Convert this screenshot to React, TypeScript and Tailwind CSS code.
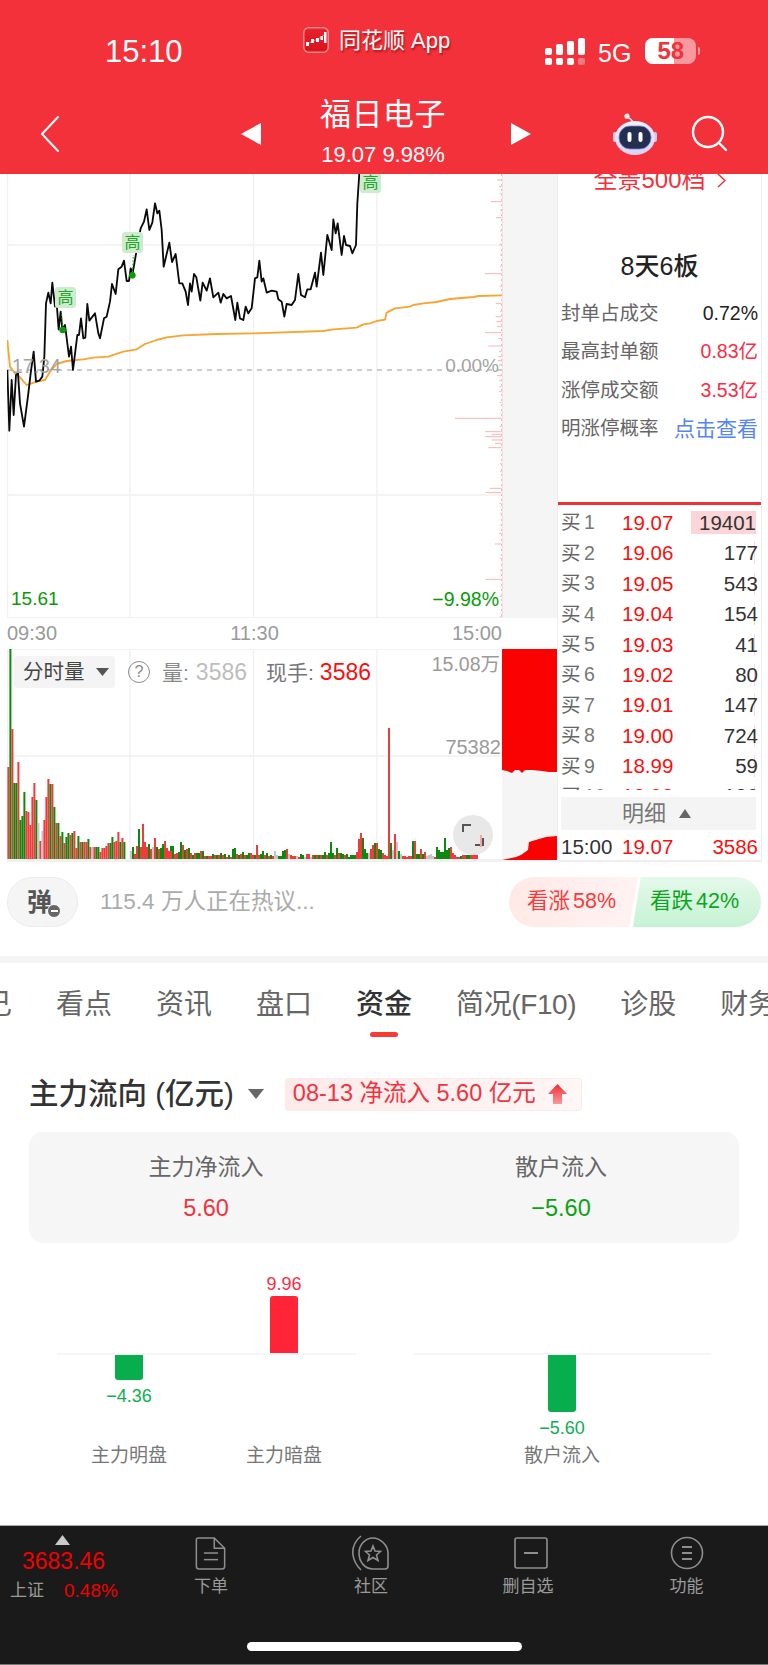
import React from "react";

const PRICE = "22,600 28,782 35,630 41,735 48,615 54,610 60,700 72,770 85,670 92,610 101,545 108,635 118,632 127,620 133,560 138,400 145,368 152,400 157,338 165,410 170,400 176,478 182,425 187,478 195,465 207,560 213,530 219,600 232,495 237,495 243,445 250,505 256,503 262,402 268,452 285,430 295,490 300,505 312,445 320,440 330,395 336,342 347,372 355,298 365,290 372,272 380,333 387,333 392,295 398,310 410,240 422,175 432,155 440,118 448,180 457,158 465,100 472,130 478,122 485,180 491,290 508,218 516,276 527,252 538,340 547,340 557,365 564,405 570,340 575,365 582,312 589,322 601,392 608,338 620,362 630,325 640,382 655,368 662,398 670,372 680,385 693,378 706,450 712,398 720,445 730,450 737,410 745,430 755,415 765,325 772,322 778,272 785,335 790,325 800,368 815,362 830,365 835,388 845,395 853,440 860,402 875,405 885,390 895,312 903,375 915,382 922,358 932,358 945,308 950,350 963,248 970,315 982,195 995,240 1000,148 1007,190 1013,160 1025,255 1032,198 1038,225 1050,228 1057,250 1068,225 1072,100 1078,10";
const AVG = "22,510 30,590 45,610 60,622 80,645 95,640 110,635 135,630 150,605 170,582 200,573 250,568 280,563 325,560 370,545 410,538 435,522 470,510 500,502 550,496 650,492 760,490 970,483 1000,478 1070,473 1090,463 1110,460 1130,453 1155,449 1160,428 1185,415 1230,410 1240,405 1270,400 1310,396 1350,387 1420,381 1435,378 1505,376";

const TICKS: [number, number][] = [[30,14],[50,8],[70,6],[95,33],[120,5],[143,17],[183,5],[223,6],[255,5],[290,5],[311,50],[350,6],[400,18],[425,5],[440,18],[455,16],[470,14],[488,50],[505,10],[528,40],[545,8],[560,10],[572,12],[585,8],[617,14],[632,7],[650,6],[665,8],[697,6],[745,140],[770,6],[785,50],[793,30],[800,50],[810,30],[820,20],[833,40],[880,5],[905,5],[955,35],[968,48],[1000,6],[1030,5],[1065,5],[1090,8],[1122,20],[1165,5],[1200,5],[1228,48],[1280,5],[1340,5],[1388,42]];

const V1 = "92r 210g 130r 76g 76g 97r 39g 43g 67g 48r 47r 34r 62r 76r 59g 36a 18r 28a 39r 62r 80r 75g 75r 52g 36r 36g 23r 27g 16r 22g 26g 24r 26g 28r 11r 23g 17r 17g 17r 17r 20g 12r 12a 12r 12g 12g 7r 11r 11r 13r 16r 16g 22g 17r 18r 27r 17g 21r 17g";
const V2 = "8a 12g 5r 13r 30g 12r 35r 17r 12r 15g 10r 12a 21r 12g 10r 11g 15g 18r 11r 8r 13g";
const V3 = "8r 13g 5r 6r 7g 17g 14r 9g 10r 11g 6r 4g 6r 6g 6g 8r 8g 3r 3g 3r 3r 5g 4r 4g 4r 6g 4r 5g 2r 4g 2r 10g 11g 5r 4g 5r 7g 4r 4g 6g 6r 4r 4g 14r 4r 5g 8g 4r 6g 3r 4g 3r 8a 4a 3g 3g 8g 9g 10r 5a 4r 3r 3r 3a 2r 5g 4g 2a 5r 5r 2a 4r 4g 4r 4g 4r 4g 7g 4r 6g 17g 6g 4r 11g 6r 6g 5g 4r 5g 2g 4g 4g 4g 7r 20r 26r 21g 10g 6g 6a 10r 14r 16g 16r 10g 9g 6r 4r 3r 131r 16g 9a 25r 17a 8g 5a 3r 3r 2r 3r 3r 18g 18r 5g 5g 10r 5g 7r 3a 4a 5a 3a 2r 12g 9g 7g 7g 21g 9g 11g 12r 6r 4r 2r 2r 3g 4r 4r 4g 4g 4r 4r 4r 4r";

const parseBars = (s: string, x0: number) =>
  s.split(" ").map((t, i) => ({ x: x0 + i * 2, h: parseInt(t), c: t.slice(-1) }));
const BARS = [...parseBars(V1, 7.4), ...parseBars(V2, 130), ...parseBars(V3, 170)];
const barFill: Record<string, string> = { r: "#ee3b3b", g: "#0b8a0d", a: "#c6c6c6" };

const BOOK = [
  ["1", "19.07", "19401"],
  ["2", "19.06", "177"],
  ["3", "19.05", "543"],
  ["4", "19.04", "154"],
  ["5", "19.03", "41"],
  ["6", "19.02", "80"],
  ["7", "19.01", "147"],
  ["8", "19.00", "724"],
  ["9", "18.99", "59"],
  ["10", "18.98", "186"],
];

function Signal() {
  return (
    <svg width="40" height="28" viewBox="0 0 40 28">
      <g fill="#fff">
        <rect x="0" y="10" width="7" height="7" rx="2" />
        <rect x="11" y="6" width="7" height="11" rx="2" />
        <rect x="22" y="3" width="7" height="14" rx="2" />
        <rect x="33" y="0" width="7" height="17" rx="2" />
        <rect x="0" y="20" width="7" height="7" rx="2" />
        <rect x="11" y="20" width="7" height="7" rx="2" />
        <rect x="22" y="20" width="7" height="7" rx="2" />
        <rect x="33" y="20" width="7" height="7" rx="2" opacity="0.35" />
      </g>
    </svg>
  );
}

function AppLogo() {
  return (
    <svg width="26" height="26" viewBox="0 0 26 26">
      <defs>
        <linearGradient id="lg" x1="0" y1="0" x2="0" y2="1">
          <stop offset="0" stopColor="#e8222c" />
          <stop offset="1" stopColor="#d9121c" />
        </linearGradient>
      </defs>
      <rect x="0.75" y="0.75" width="24.5" height="24.5" rx="5" fill="url(#lg)" stroke="#f98a90" strokeWidth="1.5" />
      <polyline points="4,17 10,14 15,12 21,8" fill="none" stroke="#fff" strokeWidth="0.6" opacity="0.7" />
      <g fill="#fff">
        <rect x="3" y="15" width="3" height="4" />
        <rect x="8" y="12" width="3" height="4" />
        <rect x="13" y="11" width="3" height="4" />
        <rect x="17.5" y="9" width="2.5" height="4" />
        <rect x="21" y="5" width="2.5" height="11" />
      </g>
    </svg>
  );
}

function Robot() {
  return (
    <svg width="46" height="42" viewBox="0 0 46 42">
      <defs>
        <linearGradient id="rb" x1="0" y1="0" x2="0" y2="1">
          <stop offset="0" stopColor="#f2f2fb" />
          <stop offset="1" stopColor="#d9d3f3" />
        </linearGradient>
      </defs>
      <path d="M21 9 C19 6 17 5 15.5 4" stroke="#e9e6f7" strokeWidth="1.6" fill="none" />
      <circle cx="15" cy="3.2" r="2.6" fill="#f5e9ea" />
      <rect x="1" y="19" width="4" height="10" rx="2" fill="#cfc9ee" />
      <rect x="41" y="19" width="4" height="10" rx="2" fill="#cfc9ee" />
      <ellipse cx="23" cy="25" rx="20" ry="17" fill="url(#rb)" />
      <rect x="7" y="13" width="32" height="23" rx="11" fill="#232f4e" stroke="#8d7fe0" strokeWidth="0.8" />
      <rect x="15.5" y="19" width="4" height="10" rx="2" fill="#fff" />
      <rect x="26.5" y="19" width="4" height="10" rx="2" fill="#fff" />
    </svg>
  );
}

function Header() {
  return (
    <header className="h-[174px] shrink-0 bg-[#f3313a] text-white relative">
      <div className="h-[96px] flex items-start">
        <div className="w-[287px] pl-[105px] pt-[35px] text-[31px] leading-[34px] font-medium">15:10</div>
        <div className="pt-[27px] pl-[16px] w-[258px] flex items-start gap-[10px]">
          <AppLogo />
          <span className="text-[22px] leading-[28px] [text-shadow:1px_2px_2px_rgba(120,0,0,0.6)]">同花顺 App</span>
        </div>
        <div className="pt-[38px] flex items-start">
          <Signal />
          <span className="ml-[13px] text-[25px] leading-[30px]">5G</span>
          <div className="ml-[14px] relative w-[51px] h-[26px] rounded-[8px] bg-white/50 overflow-hidden">
            <div className="w-[29px] h-full bg-white" />
            <span className="absolute inset-0 flex items-center justify-center text-[24px] font-bold text-[#f3313a]">58</span>
          </div>
          <div className="ml-[2px] mt-[9px] w-[2px] h-[8px] rounded-r bg-white/50" />
        </div>
      </div>
      <div className="h-[78px] flex items-start">
        <div className="w-[241px] pl-[38px] pt-[19px]">
          <svg width="24" height="38" viewBox="0 0 24 38">
            <polyline points="20,2 4,19 20,36" fill="none" stroke="#fff" strokeWidth="2" strokeLinecap="round" strokeLinejoin="round" />
          </svg>
        </div>
        <div className="pt-[27px]">
          <svg width="20" height="22" viewBox="0 0 20 22"><polygon points="20,0 20,22 0,11" fill="#fff" /></svg>
        </div>
        <div className="w-[250px] pr-[6px] flex flex-col items-center -mt-[1px]">
          <div className="text-[31px] leading-[40px] tracking-[0.5px]">福日电子</div>
          <div className="text-[22px] leading-[26px] mt-[7px]">19.07 9.98%</div>
        </div>
        <div className="pt-[27px]">
          <svg width="20" height="22" viewBox="0 0 20 22"><polygon points="0,0 0,22 20,11" fill="#fff" /></svg>
        </div>
        <div className="ml-[81px] pt-[17px]"><Robot /></div>
        <div className="ml-[33px] pt-[17px]">
          <svg width="40" height="40" viewBox="0 0 40 40">
            <circle cx="17" cy="19" r="15" fill="none" stroke="#fff" strokeWidth="2.4" />
            <line x1="28" y1="30" x2="35" y2="37" stroke="#fff" strokeWidth="2.4" strokeLinecap="round" />
          </svg>
        </div>
      </div>
    </header>
  );
}

function GaoTag({ className }: { className: string }) {
  return (
    <div className={`absolute w-[21px] h-[21px] rounded-[3px] bg-[#cdeccd] flex items-center justify-center text-[16px] leading-none text-[#22a52a] ${className}`}>高</div>
  );
}

function PriceChart() {
  return (
    <div className="relative w-[495px] h-[444px] shrink-0 overflow-hidden">
      <svg width="495" height="444" viewBox="7 174 495 444" className="block">
        <g stroke="#f0f0f0" strokeWidth="1.3">
          <line x1="7.5" y1="174" x2="7.5" y2="618" />
          <line x1="130" y1="174" x2="130" y2="618" />
          <line x1="253.5" y1="174" x2="253.5" y2="618" />
          <line x1="377" y1="174" x2="377" y2="618" />
          <line x1="7" y1="245" x2="502" y2="245" />
          <line x1="7" y1="495" x2="502" y2="495" />
          <line x1="7" y1="618" x2="502" y2="618" strokeWidth="2" />
        </g>
        <line x1="7" y1="370" x2="502" y2="370" stroke="#9a9a9a" strokeWidth="1.2" strokeDasharray="5 5" />
        <line x1="501.5" y1="174" x2="501.5" y2="618" stroke="#f8b7bb" strokeWidth="1" strokeDasharray="2 3" />
        <g transform="translate(0 170) scale(0.33333)">
          {TICKS.map(([y, l], i) => (
            <line key={i} x1={1505 - l} y1={y} x2={1505} y2={y} stroke="#f9b3b6" strokeWidth="3" />
          ))}
          <polyline points={AVG} fill="none" stroke="#f9a431" strokeWidth="5.5" strokeLinejoin="round" />
          <polyline points={PRICE} fill="none" stroke="#0a0a0a" strokeWidth="5.5" strokeLinejoin="round" />
          <line x1="188" y1="478" x2="184" y2="420" stroke="#20a528" strokeWidth="3" strokeDasharray="5 5" />
          <line x1="397" y1="316" x2="400" y2="255" stroke="#20a528" strokeWidth="3" strokeDasharray="5 5" />
          <circle cx="188" cy="480" r="10" fill="#0a9a0a" />
          <circle cx="397" cy="316" r="10" fill="#0a9a0a" />
        </g>
      </svg>
      <GaoTag className="left-[48px] top-[113px]" />
      <GaoTag className="left-[115px] top-[58px]" />
      <GaoTag className="left-[353px] top-[-2px]" />
      <span className="absolute left-[5px] top-[180px] text-[19.5px] leading-[24px] text-[#a3a3a3]">17.34</span>
      <span className="absolute right-[3px] top-[180px] text-[19px] leading-[24px] text-[#a3a3a3]">0.00%</span>
      <span className="absolute left-[4px] top-[413px] text-[19px] leading-[24px] text-[#0a9a0a]">15.61</span>
      <span className="absolute right-[3px] top-[413px] text-[19.5px] leading-[24px] text-[#0a9a0a]">−9.98%</span>
    </div>
  );
}

function VolumeChart() {
  return (
    <div className="relative w-[495px] h-[213px] shrink-0 overflow-hidden">
      <svg width="495" height="213" viewBox="7 649 495 213" className="block">
        <g stroke="#f0f0f0" strokeWidth="1.3">
          <line x1="7.5" y1="649" x2="7.5" y2="862" />
          <line x1="130" y1="649" x2="130" y2="860" />
          <line x1="253.5" y1="649" x2="253.5" y2="860" />
          <line x1="377" y1="649" x2="377" y2="860" />
          <line x1="7" y1="649" x2="502" y2="649" />
          <line x1="7" y1="756" x2="502" y2="756" />
          <line x1="7" y1="860.5" x2="502" y2="860.5" strokeWidth="3" />
        </g>
        {BARS.map((b, i) => (
          <rect key={i} x={b.x} y={859 - b.h} width="2" height={b.h} fill={barFill[b.c]} />
        ))}
      </svg>
      <div className="absolute left-[7px] top-[7px] flex items-center">
        <div className="w-[101px] h-[32px] rounded-[3px] bg-[#f4f4f4] flex items-center pl-[9px]">
          <span className="text-[20.5px] leading-none text-[#444]">分时量</span>
          <svg className="ml-[11px]" width="13" height="8" viewBox="0 0 13 8"><polygon points="0,0 13,0 6.5,8" fill="#555" /></svg>
        </div>
        <div className="ml-[13px] w-[22px] h-[22px] rounded-full border-[1.5px] border-[#8a8a8a] flex items-center justify-center text-[16px] leading-none text-[#8a8a8a]">?</div>
        <span className="ml-[12px] text-[21px] leading-none text-[#8a8a8a]">量:</span>
        <span className="ml-[7px] text-[23px] leading-none text-[#bdbdbd]">3586</span>
        <span className="ml-[19px] text-[21px] leading-none text-[#777]">现手:</span>
        <span className="ml-[6px] text-[23px] leading-none text-[#f80f0f]">3586</span>
      </div>
      <span className="absolute right-[2px] top-[3px] text-[19.5px] leading-[24px] text-[#9a9a9a]">15.08万</span>
      <span className="absolute right-[1px] top-[86px] text-[20px] leading-[24px] text-[#9a9a9a]">75382</span>
      <div className="absolute left-[446px] top-[166px] w-[40px] h-[40px] rounded-full bg-[#e4e4e4]/85 flex items-center justify-center">
        <svg width="24" height="24" viewBox="0 0 24 24" fill="none" stroke="#555" strokeWidth="2">
          <polyline points="2,9 2,2 10,2" />
          <polyline points="22,15 22,22 14,22" />
          <line x1="20" y1="12" x2="20" y2="24" stroke="#f3a5a8" strokeWidth="2" />
        </svg>
      </div>
    </div>
  );
}

function SideStrip() {
  return (
    <div className="w-[55px] h-[213px] bg-[#f5f5f5] shrink-0">
      <svg width="55" height="213" viewBox="0 0 55 213" className="block">
        <polygon points="0,0 55,0 55,123 47,123 40,122 30,121 23,121 20,124 17,121 13,121 10,124 5,122 0,121" fill="#fb0202" />
        <polygon points="0,211 14,208 19,206 26,201 27,193 37,190 44,188 55,187 55,211" fill="#fb0202" />
      </svg>
    </div>
  );
}

function StatRow({ label, value, tone }: { label: string; value: string; tone: string }) {
  return (
    <div className="h-[38.5px] flex items-center justify-between pl-[3px] pr-[3px]">
      <span className="text-[19.5px] leading-none text-[#666]">{label}</span>
      <span className={`leading-none ${tone}`}>{value}</span>
    </div>
  );
}

function RightPanel() {
  return (
    <div className="w-[205px] h-[688px] shrink-0 border-x border-b-[2px] border-[#eeeeee] flex flex-col overflow-hidden">
      <div className="h-[328px] shrink-0">
        <div className="-mt-[8px] h-[28px] flex items-center justify-center gap-[11px] text-[24px] leading-none text-[#f3313a]">
          <span>全景500档</span>
          <svg width="9" height="15" viewBox="0 0 9 15"><polyline points="1,1 8,7.5 1,14" fill="none" stroke="#f3313a" strokeWidth="1.5" /></svg>
        </div>
        <div className="mt-[57px] h-[30px] text-center text-[25px] leading-[30px] font-medium text-[#222]">8天6板</div>
        <div className="mt-[13px]">
          <StatRow label="封单占成交" value="0.72%" tone="text-[19.5px] text-[#222]" />
          <StatRow label="最高封单额" value="0.83亿" tone="text-[19.5px] text-[#fb2c44]" />
          <StatRow label="涨停成交额" value="3.53亿" tone="text-[19.5px] text-[#fb2c44]" />
          <StatRow label="明涨停概率" value="点击查看" tone="text-[21px] text-[#5684f0]" />
        </div>
      </div>
      <div className="h-[3px] bg-[#ee3236] shrink-0" />
      <div className="h-[285px] shrink-0 overflow-hidden pt-[3px]">
        {BOOK.map(([n, p, q], i) => (
          <div key={n} className="h-[30.4px] flex items-center pl-[3px] pr-[3px] relative">
            <span className="text-[19.5px] leading-none text-[#666] w-[20px]">买</span>
            <span className="text-[19.5px] leading-none text-[#777] ml-[3px] w-[38px]">{n}</span>
            <span className="text-[20.5px] leading-none text-[#f80f0f] w-[61px]">{p}</span>
            {i === 0 && <div className="absolute right-[5px] top-[3px] w-[65px] h-[23px] bg-[#fbd5d7]" />}
            {i > 0 && <div className="absolute right-[6px] top-[4px] w-[1px] h-[22px] bg-[#fbd5d7]" />}
            <span className={`relative flex-1 text-right text-[20.5px] leading-none text-[#333] ${i === 0 ? "pr-[2px]" : ""}`}>{q}</span>
          </div>
        ))}
      </div>
      <div className="ml-[3px] mr-[5px] h-[33px] shrink-0 mt-[7px] bg-[#f4f4f4] flex items-center pl-[61px]">
        <span className="text-[22px] leading-none text-[#777]">明细</span>
        <svg className="ml-[13px]" width="12" height="9" viewBox="0 0 12 9"><polygon points="6,0 12,9 0,9" fill="#666" /></svg>
      </div>
      <div className="h-[31px] flex items-center pl-[3px] pr-[3px] mt-[4px]">
        <span className="text-[20.5px] leading-none text-[#333] w-[61px]">15:00</span>
        <span className="text-[20.5px] leading-none text-[#f80f0f]">19.07</span>
        <span className="flex-1 text-right text-[20.5px] leading-none text-[#f80f0f]">3586</span>
      </div>
    </div>
  );
}

function QuoteSection() {
  return (
    <section className="h-[688px] shrink-0 flex pl-[7px]">
      <div className="w-[550px] shrink-0 flex flex-col">
        <div className="flex h-[444px]">
          <PriceChart />
          <div className="w-[55px] bg-[#f5f5f5] border-l border-[#f3c6c8]/40" />
        </div>
        <div className="h-[31px] w-[495px] pb-[2px] flex items-center justify-between text-[20px] leading-none text-[#9a9a9a]">
          <span>09:30</span>
          <span>11:30</span>
          <span>15:00</span>
        </div>
        <div className="flex h-[213px]">
          <VolumeChart />
          <SideStrip />
        </div>
      </div>
      <RightPanel />
    </section>
  );
}

function CommentRow() {
  return (
    <section className="h-[94px] shrink-0 flex items-start pt-[15px] pl-[7px] pr-[7px]">
      <div className="relative w-[71px] h-[50px] rounded-full bg-[#f5f5f5] border border-[#ececec] flex items-center justify-center">
        <span className="text-[25px] leading-none font-bold text-[#555] -ml-[6px]">弹</span>
        <span className="absolute left-[39px] top-[26px] w-[14px] h-[14px] rounded-full bg-[#666] border border-white flex items-center justify-center">
          <span className="w-[7px] h-[1.5px] bg-white" />
        </span>
      </div>
      <span className="ml-[22px] h-[50px] flex items-center text-[22.5px] leading-none text-[#aaaaaa]">115.4 万人正在热议...</span>
      <div className="ml-auto flex">
        <div className="w-[129px] h-[50px] rounded-l-full bg-gradient-to-r from-[#ffe9e7] to-[#fff3f2] [clip-path:polygon(0_0,100%_0,93%_100%,0_100%)] flex items-center pl-[18px] text-[21.5px] leading-none text-[#f83a3a]">看涨<span className="ml-[3px]">58%</span></div>
        <div className="-ml-[5px] w-[128px] h-[50px] rounded-r-full bg-gradient-to-b from-[#e4f9ea] to-[#c6f2d4] [clip-path:polygon(6%_0,100%_0,100%_100%,0_100%)] flex items-center pl-[17px] text-[21.5px] leading-none text-[#0aa61c]">看跌<span className="ml-[3px]">42%</span></div>
      </div>
    </section>
  );
}

function Tabs() {
  const tabs = ["看点", "资讯", "盘口", "资金", "简况(F10)", "诊股", "财务"];
  return (
    <section className="h-[77px] shrink-0 overflow-hidden flex items-start pt-[28px] gap-[44px] whitespace-nowrap">
      <span className="text-[28px] leading-[28px] text-[#666] -ml-[16px] shrink-0">己</span>
      {tabs.map((t) => (
        <span key={t} className={`relative shrink-0 text-[28px] leading-[28px] ${t === "资金" ? "font-medium text-[#333]" : "text-[#666]"} ${t === "简况(F10)" ? "tracking-[-0.4px]" : ""}`}>
          {t}
          {t === "资金" && <span className="absolute left-[14px] top-[41px] w-[28px] h-[5px] rounded-full bg-[#f83a33]" />}
        </span>
      ))}
    </section>
  );
}

function Bar({ h, color, down }: { h: number; color: string; down?: boolean }) {
  return <div className={`w-[28px] ${down ? "rounded-b-[3px]" : "rounded-t-[3px]"} ${color}`} style={{ height: h }} />;
}

function MiniColumn({ value, label, h, up }: { value: string; label: string; h: number; up?: boolean }) {
  const tone = up ? "text-[#fb2c44]" : "text-[#0bb04f]";
  const fill = up ? "bg-[#ff2437]" : "bg-[#08ad4e]";
  return (
    <div className="w-[100px] flex flex-col items-center">
      <div className="h-[95px] w-full flex flex-col items-center justify-end">
        {up && <span className={`text-[18px] leading-[22px] mb-[1px] ${tone}`}>{value}</span>}
        {up && <Bar h={h} color={fill} />}
      </div>
      <div className="h-[2px] w-0" />
      <div className="h-[85px] w-full flex flex-col items-center">
        {!up && <Bar h={h} color={fill} down />}
        {!up && <span className={`text-[18px] leading-[22px] mt-[5px] ${tone}`}>{value}</span>}
      </div>
      <span className="mt-[4px] text-[19px] leading-[24px] text-[#777]">{label}</span>
    </div>
  );
}

function FundFlow() {
  return (
    <section className="flex-1 px-[29px]">
      <div className="h-[36px] flex items-center mt-[36px]">
        <span className="text-[29.5px] leading-none font-medium text-[#333] whitespace-nowrap">主力流向 (亿元)</span>
        <svg className="ml-[14px] shrink-0" width="16" height="10" viewBox="0 0 16 10"><polygon points="0,0 16,0 8,10" fill="#666" /></svg>
        <div className="ml-[21px] w-[297px] shrink-0 h-[33px] rounded-[3px] border border-[#fdeaea] bg-gradient-to-r from-[#fdeaea] to-[#fff6f6] flex items-center pl-[7px] text-[23.5px] leading-none text-[#f0333d] whitespace-nowrap">
          08-13 净流入 5.60 亿元
          <svg className="ml-[12px] shrink-0" width="19" height="20" viewBox="0 0 19 20">
            <defs>
              <linearGradient id="up" x1="0" y1="0" x2="0" y2="1">
                <stop offset="0" stopColor="#ee2d35" />
                <stop offset="1" stopColor="#f89a9c" />
              </linearGradient>
            </defs>
            <polygon points="9.5,0 19,10 14,10 14,20 5,20 5,10 0,10" fill="url(#up)" />
          </svg>
        </div>
      </div>
      <div className="mt-[20px] h-[111px] rounded-[14px] bg-[#f6f6f6] grid grid-cols-[354px_356px] text-center">
        <div className="pt-[22px]">
          <div className="text-[23px] leading-[26px] text-[#666]">主力净流入</div>
          <div className="mt-[14px] text-[23.5px] leading-[28px] font-medium text-[#f0333d]">5.60</div>
        </div>
        <div className="pt-[22px]">
          <div className="text-[23px] leading-[26px] text-[#666]">散户流入</div>
          <div className="mt-[14px] text-[23.5px] leading-[28px] font-medium text-[#0aa314]">−5.60</div>
        </div>
      </div>
      <div className="flex mt-[15px]">
        <div className="w-[299px] ml-[28px] relative flex justify-center gap-[55px]">
          <div className="absolute left-0 right-0 top-[95px] h-[2px] bg-[#f5f5f5]" />
          <MiniColumn value="−4.36" label="主力明盘" h={25} />
          <MiniColumn value="9.96" label="主力暗盘" h={57} up />
        </div>
        <div className="w-[298px] ml-[57px] relative flex justify-center">
          <div className="absolute left-0 right-0 top-[95px] h-[2px] bg-[#f5f5f5]" />
          <MiniColumn value="−5.60" label="散户流入" h={57} />
        </div>
      </div>
    </section>
  );
}

function TabItem({ label, className, children }: { label: string; className: string; children: React.ReactNode }) {
  return (
    <div className={`${className} flex flex-col items-center pt-[9px]`}>
      <div className="h-[36px] flex items-center justify-center">{children}</div>
      <span className="mt-[6px] text-[17px] leading-[20px] text-[#9a9a9a]">{label}</span>
    </div>
  );
}

function BottomBar() {
  return (
    <footer className="h-[140px] shrink-0 relative bg-[#1a1a1a] border-t-[1px] border-[#a8a8a8] flex">
      <div className="w-[131px] shrink-0 flex flex-col pl-[10px]">
        <svg className="ml-[45px] mt-[9px]" width="15" height="10" viewBox="0 0 15 10"><polygon points="7.5,0 15,10 0,10" fill="#c9c9c9" /></svg>
        <span className="ml-[12px] mt-[2px] text-[23px] leading-[28px] text-[#f00000]">3683.46</span>
        <div className="flex items-center mt-[2px] h-[26px]">
          <span className="text-[17px] leading-none text-[#9a9a9a]">上证</span>
          <span className="ml-[20px] text-[19px] leading-none text-[#f00000]">0.48%</span>
        </div>
      </div>
      <TabItem label="下单" className="w-[160px]">
        <svg className="-ml-[1px]" width="31" height="33" viewBox="0 0 32 35" fill="none" stroke="#8f8f8f" strokeWidth="1.6">
          <path d="M3 1 H20 L31 12 V31 Q31 34 28 34 H4 Q1 34 1 31 V3 Q1 1 3 1 Z" />
          <path d="M20 1 V12 H31" />
          <line x1="9" y1="17" x2="24" y2="17" />
          <line x1="9" y1="24" x2="24" y2="24" />
        </svg>
      </TabItem>
      <TabItem label="社区" className="w-[160px]">
        <svg width="38" height="36" viewBox="0 0 38 36" fill="none" stroke="#8f8f8f" strokeWidth="1.6">
          <path d="M9 1 C3 6 0 12 1 20 C2 27 5 31 9 35" />
          <path d="M21 3 C28 3 36 10 36 18 V31 Q36 34 33 34 H21 C13 34 7 27 7 18 C7 10 13 3 21 3 Z" />
          <polygon points="21,11 23,16 28.5,16.5 24.5,20 26,25.5 21,22.5 16,25.5 17.5,20 13.5,16.5 19,16" />
        </svg>
      </TabItem>
      <TabItem label="删自选" className="w-[154px]">
        <svg className="ml-[6px]" width="34" height="32" viewBox="0 0 34 32" fill="none" stroke="#8f8f8f" strokeWidth="1.6">
          <rect x="1" y="1" width="32" height="30" rx="2" />
          <line x1="10" y1="16" x2="24" y2="16" strokeWidth="2" />
        </svg>
      </TabItem>
      <TabItem label="功能" className="w-[163px]">
        <svg width="34" height="34" viewBox="0 0 34 34" fill="none" stroke="#8f8f8f" strokeWidth="1.6">
          <circle cx="17" cy="17" r="15.5" />
          <line x1="12" y1="11" x2="22" y2="11" strokeWidth="2" />
          <line x1="12" y1="17" x2="22" y2="17" strokeWidth="2" />
          <line x1="12" y1="23" x2="22" y2="23" strokeWidth="2" />
        </svg>
      </TabItem>
      <div className="absolute left-[247px] top-[116px] w-[275px] h-[9px] rounded-full bg-white" />
      <div className="absolute left-0 right-0 bottom-0 h-[1px] bg-[#777]" />
    </footer>
  );
}

export default function App() {
  return (
    <div className="w-[768px] h-[1665px] bg-white overflow-hidden flex flex-col [font-family:'Liberation_Sans','Noto_Sans_CJK_SC',sans-serif]">
      <Header />
      <QuoteSection />
      <CommentRow />
      <div className="h-[7px] shrink-0 bg-[#f4f4f4]" />
      <Tabs />
      <FundFlow />
      <BottomBar />
    </div>
  );
}
